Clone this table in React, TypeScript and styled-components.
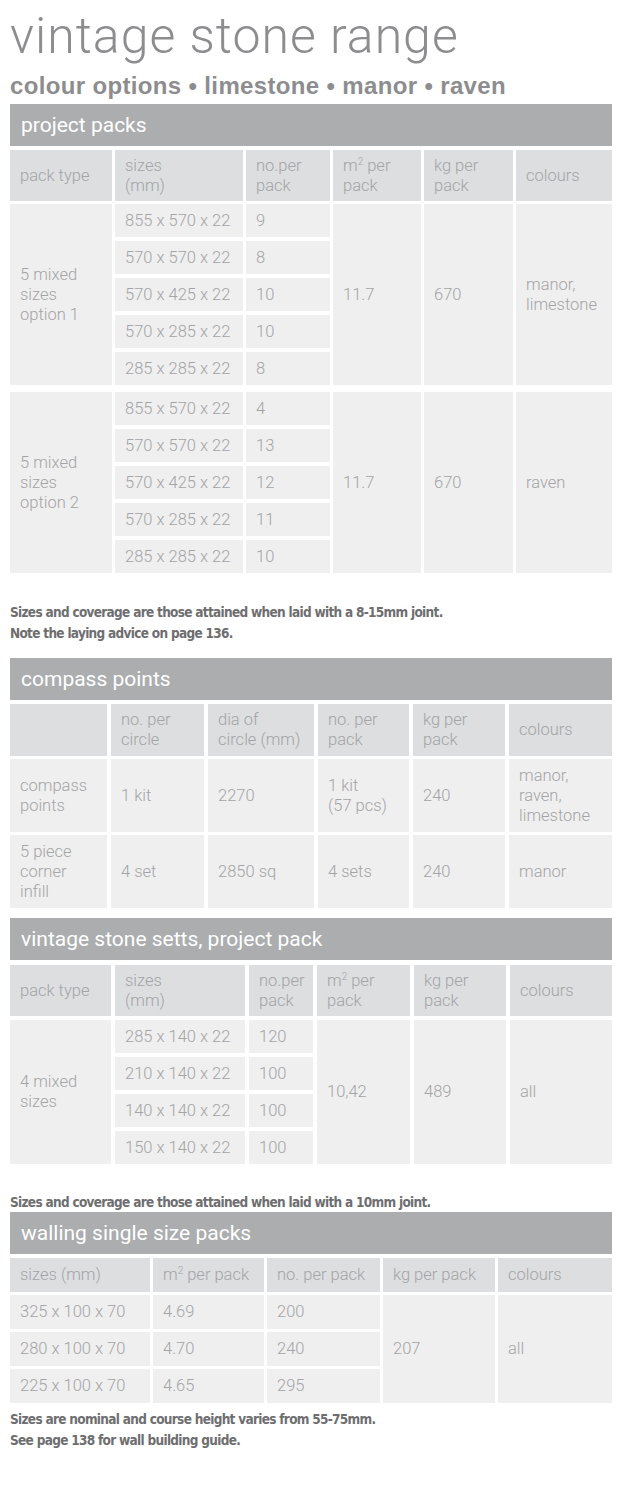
import React from "react";
import styled, { createGlobalStyle } from "styled-components";

const Global = createGlobalStyle`
  html, body { margin: 0; padding: 0; background: #ffffff; }
  body { font-family: Roboto, "Liberation Sans", Arial, sans-serif; }
`;

const Page = styled.div`
  width: 620px;
  box-sizing: border-box;
  padding: 8px 8px 40px 10px;
  display: flex;
  flex-direction: column;
`;

const Title = styled.h1`
  margin: 0;
  font-family: Roboto, "Liberation Sans", sans-serif;
  font-weight: 300;
  font-size: 50px;
  letter-spacing: 1px;
  line-height: 57px;
  color: #8d8d90;
`;

const Subtitle = styled.h2`
  margin: 6px 0 0 0;
  font-family: "Liberation Sans", Arial, sans-serif;
  font-weight: 700;
  font-size: 24px;
  letter-spacing: 0.35px;
  line-height: 29px;
  color: #8d8d90;
`;

const Section = styled.section<{ $top: number }>`
  margin-top: ${(p) => p.$top}px;
  display: flex;
  flex-direction: column;
`;

const Bar = styled.div`
  height: 42px;
  background: #abadaf;
  color: #ffffff;
  font-family: Roboto, "Liberation Sans", sans-serif;
  font-size: 21px;
  display: flex;
  align-items: center;
  padding-left: 11px;
`;

const Grid = styled.div<{ $cols: string; $colGap: number; $rowGap: number; $rows: string; $top: number }>`
  display: grid;
  grid-template-columns: ${(p) => p.$cols};
  grid-template-rows: ${(p) => p.$rows};
  column-gap: ${(p) => p.$colGap}px;
  row-gap: ${(p) => p.$rowGap}px;
  margin-top: ${(p) => p.$top}px;
`;

const Cell = styled.div<{ $head?: boolean; $span?: number }>`
  background: ${(p) => (p.$head ? "#dcdee0" : "#efefef")};
  color: #a4a4a6;
  font-family: Roboto, "Liberation Sans", sans-serif;
  font-weight: 300;
  font-size: 16.5px;
  line-height: 20px;
  padding: 0 10px;
  display: flex;
  align-items: center;
  grid-row: ${(p) => (p.$span ? `span ${p.$span}` : "auto")};
  white-space: pre-line;
`;

const Note = styled.p<{ $top: number; $lh: number }>`
  margin: ${(p) => p.$top}px 0 0 0;
  font-family: "Liberation Sans Narrow", "DejaVu Sans Condensed", sans-serif;
  font-weight: 700;
  font-size: 13.5px;
  letter-spacing: -0.7px;
  line-height: ${(p) => p.$lh}px;
  color: #6e6e70;
  white-space: pre-line;
`;

const Sup = styled.sup`
  font-size: 10px;
  line-height: 0;
  vertical-align: 6px;
`;

const M2 = ({ rest }: { rest: string }) => (
  <span>
    m<Sup>2</Sup>
    {rest}
  </span>
);

const ppCols = "102px 128px 84px 88px 89px 96px";
const settsCols = "101px 130px 64px 93px 92px 102px";

const ppGroups = [
  {
    type: "5 mixed\nsizes\noption 1",
    rows: [
      ["855 x 570 x 22", "9"],
      ["570 x 570 x 22", "8"],
      ["570 x 425 x 22", "10"],
      ["570 x 285 x 22", "10"],
      ["285 x 285 x 22", "8"],
    ],
    m2: "11.7",
    kg: "670",
    colours: "manor,\nlimestone",
  },
  {
    type: "5 mixed\nsizes\noption 2",
    rows: [
      ["855 x 570 x 22", "4"],
      ["570 x 570 x 22", "13"],
      ["570 x 425 x 22", "12"],
      ["570 x 285 x 22", "11"],
      ["285 x 285 x 22", "10"],
    ],
    m2: "11.7",
    kg: "670",
    colours: "raven",
  },
];

const setts = [
  ["285 x 140 x 22", "120"],
  ["210 x 140 x 22", "100"],
  ["140 x 140 x 22", "100"],
  ["150 x 140 x 22", "100"],
];

const walling = [
  ["325 x 100 x 70", "4.69", "200"],
  ["280 x 100 x 70", "4.70", "240"],
  ["225 x 100 x 70", "4.65", "295"],
];

const M2Head = () => (
  <Cell $head>
    <div>
      <M2 rest=" per" />
      <br />
      pack
    </div>
  </Cell>
);

export default function App() {
  return (
    <>
      <Global />
      <Page>
        <Title>vintage stone range</Title>
        <Subtitle>colour options • limestone • manor • raven</Subtitle>

        <Section $top={4}>
          <Bar>project packs</Bar>
          <Grid $cols={ppCols} $colGap={3} $rowGap={0} $rows="51px" $top={4}>
            <Cell $head>pack type</Cell>
            <Cell $head>{"sizes\n(mm)"}</Cell>
            <Cell $head>{"no.per\npack"}</Cell>
            <M2Head />
            <Cell $head>{"kg per\npack"}</Cell>
            <Cell $head>colours</Cell>
          </Grid>
          {ppGroups.map((g, i) => (
            <Grid
              key={i}
              $cols={ppCols}
              $colGap={3}
              $rowGap={4}
              $rows="repeat(5, 33px)"
              $top={i === 0 ? 3 : 7}
            >
              <Cell $span={5}>{g.type}</Cell>
              <Cell>{g.rows[0][0]}</Cell>
              <Cell>{g.rows[0][1]}</Cell>
              <Cell $span={5}>{g.m2}</Cell>
              <Cell $span={5}>{g.kg}</Cell>
              <Cell $span={5}>{g.colours}</Cell>
              {g.rows.slice(1).map((r, j) => (
                <React.Fragment key={j}>
                  <Cell>{r[0]}</Cell>
                  <Cell>{r[1]}</Cell>
                </React.Fragment>
              ))}
            </Grid>
          ))}
        </Section>

        <Note $top={29} $lh={21}>
          {"Sizes and coverage are those attained when laid with a 8-15mm joint.\nNote the laying advice on page 136."}
        </Note>

        <Section $top={14}>
          <Bar>compass points</Bar>
          <Grid
            $cols="97px 93px 106px 91px 92px 103px"
            $colGap={4}
            $rowGap={3}
            $rows="52px 73px 73px"
            $top={4}
          >
            <Cell $head />
            <Cell $head>{"no. per\ncircle"}</Cell>
            <Cell $head>{"dia of\ncircle (mm)"}</Cell>
            <Cell $head>{"no. per\npack"}</Cell>
            <Cell $head>{"kg per\npack"}</Cell>
            <Cell $head>colours</Cell>
            <Cell>{"compass\npoints"}</Cell>
            <Cell>1 kit</Cell>
            <Cell>2270</Cell>
            <Cell>{"1 kit\n(57 pcs)"}</Cell>
            <Cell>240</Cell>
            <Cell>{"manor,\nraven,\nlimestone"}</Cell>
            <Cell>{"5 piece\ncorner\ninfill"}</Cell>
            <Cell>4 set</Cell>
            <Cell>2850 sq</Cell>
            <Cell>4 sets</Cell>
            <Cell>240</Cell>
            <Cell>manor</Cell>
          </Grid>
        </Section>

        <Section $top={10}>
          <Bar>vintage stone setts, project pack</Bar>
          <Grid $cols={settsCols} $colGap={4} $rowGap={0} $rows="51px" $top={5}>
            <Cell $head>pack type</Cell>
            <Cell $head>{"sizes\n(mm)"}</Cell>
            <Cell $head>{"no.per\npack"}</Cell>
            <M2Head />
            <Cell $head>{"kg per\npack"}</Cell>
            <Cell $head>colours</Cell>
          </Grid>
          <Grid
            $cols={settsCols}
            $colGap={4}
            $rowGap={4}
            $rows="repeat(4, 33px)"
            $top={4}
          >
            <Cell $span={4}>{"4 mixed\nsizes"}</Cell>
            <Cell>{setts[0][0]}</Cell>
            <Cell>{setts[0][1]}</Cell>
            <Cell $span={4}>10,42</Cell>
            <Cell $span={4}>489</Cell>
            <Cell $span={4}>all</Cell>
            {setts.slice(1).map((r, j) => (
              <React.Fragment key={j}>
                <Cell>{r[0]}</Cell>
                <Cell>{r[1]}</Cell>
              </React.Fragment>
            ))}
          </Grid>
        </Section>

        <Note $top={30} $lh={16}>
          Sizes and coverage are those attained when laid with a 10mm joint.
        </Note>

        <Section $top={2}>
          <Bar>walling single size packs</Bar>
          <Grid
            $cols="140px 111px 113px 112px 114px"
            $colGap={3}
            $rowGap={3}
            $rows="34px repeat(3, 34px)"
            $top={4}
          >
            <Cell $head>sizes (mm)</Cell>
            <Cell $head>
              <M2 rest=" per pack" />
            </Cell>
            <Cell $head>no. per pack</Cell>
            <Cell $head>kg per pack</Cell>
            <Cell $head>colours</Cell>
            <Cell>{walling[0][0]}</Cell>
            <Cell>{walling[0][1]}</Cell>
            <Cell>{walling[0][2]}</Cell>
            <Cell $span={3}>207</Cell>
            <Cell $span={3}>all</Cell>
            {walling.slice(1).map((r, j) => (
              <React.Fragment key={j}>
                <Cell>{r[0]}</Cell>
                <Cell>{r[1]}</Cell>
                <Cell>{r[2]}</Cell>
              </React.Fragment>
            ))}
          </Grid>
        </Section>

        <Note $top={6} $lh={21}>
          {"Sizes are nominal and course height varies from 55-75mm.\nSee page 138 for wall building guide."}
        </Note>
      </Page>
    </>
  );
}
